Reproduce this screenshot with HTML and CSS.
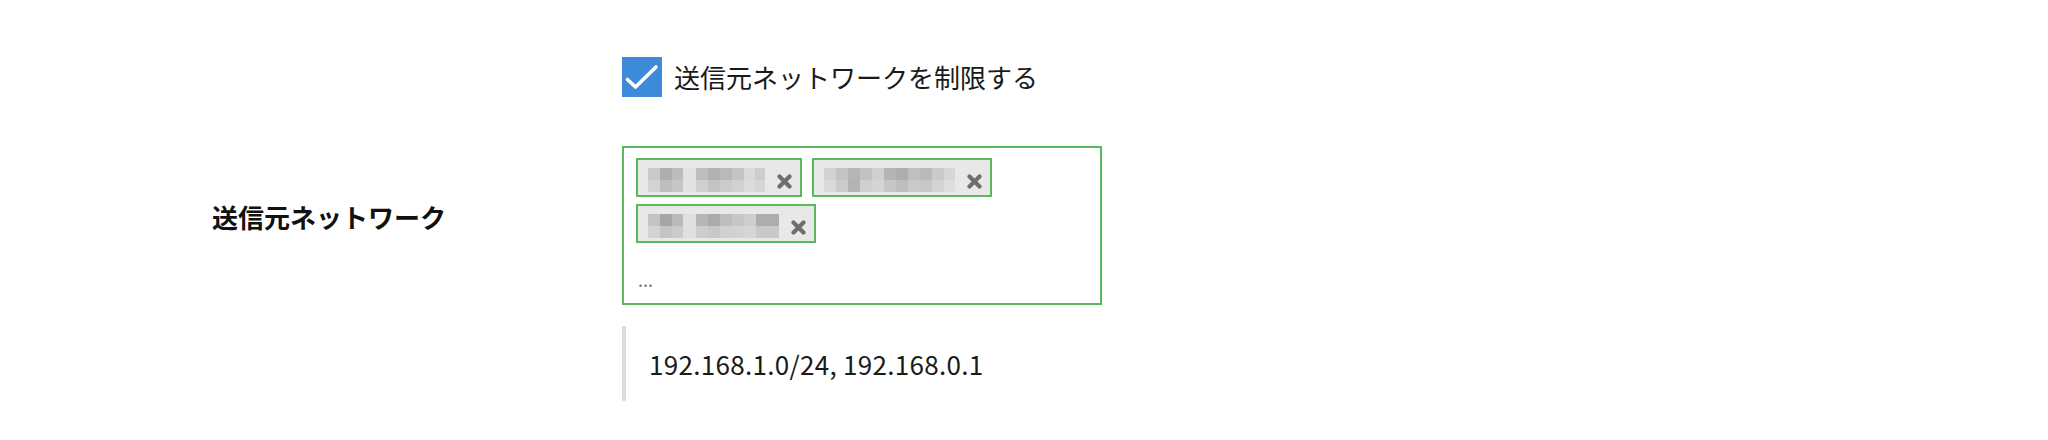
FILE: index.html
```html
<!DOCTYPE html>
<html lang="ja">
<head>
<meta charset="utf-8">
<title>送信元ネットワーク</title>
<link rel="stylesheet" href="styles.css">
</head>
<body>
<div class="form">
  <div class="row check-row">
    <div class="spacer"></div>
    <label class="check">
      <span class="box-icon">
        <svg width="40" height="40" viewBox="0 0 40 40"><path d="M5.5 22.5 L13.5 30 L34 10" fill="none" stroke="#fff" stroke-width="3.6" stroke-linecap="round" stroke-linejoin="round"/></svg>
      </span>
      <span class="check-text">送信元ネットワークを制限する</span>
    </label>
  </div>

  <div class="row field-row">
    <div class="label">送信元ネットワーク</div>
    <div class="select">
      <div class="tags">
        <span class="tag">
          <svg class="mosaic" width="117" height="24" viewBox="0 0 117 24">
            <rect x="0" y="0" width="12" height="12" fill="#c9c9c9"/><rect x="12" y="0" width="12" height="12" fill="#aeaeae"/><rect x="24" y="0" width="11" height="12" fill="#bcbcbc"/>
            <rect x="35" y="0" width="13" height="24" fill="#e2e2e2"/>
            <rect x="48" y="0" width="12" height="12" fill="#bdbdbd"/><rect x="60" y="0" width="12" height="12" fill="#b1b1b1"/><rect x="72" y="0" width="12" height="12" fill="#b9b9b9"/><rect x="84" y="0" width="12" height="12" fill="#c4c4c4"/><rect x="96" y="0" width="11" height="12" fill="#d9d9d9"/><rect x="107" y="0" width="10" height="12" fill="#cdcdcd"/>
            <rect x="0" y="12" width="12" height="12" fill="#d3d3d3"/><rect x="12" y="12" width="12" height="12" fill="#bdbdbd"/><rect x="24" y="12" width="11" height="12" fill="#c6c6c6"/>
            <rect x="48" y="12" width="12" height="12" fill="#cfcfcf"/><rect x="60" y="12" width="12" height="12" fill="#c3c3c3"/><rect x="72" y="12" width="12" height="12" fill="#cbcbcb"/><rect x="84" y="12" width="12" height="12" fill="#d1d1d1"/><rect x="96" y="12" width="11" height="12" fill="#dcdcdc"/><rect x="107" y="12" width="10" height="12" fill="#d6d6d6"/>
          </svg>
          <svg class="x" width="15" height="15" viewBox="0 0 15 15"><path d="M2.5 2.5 L12.5 12.5 M12.5 2.5 L2.5 12.5" stroke="#6e6e6e" stroke-width="4.2" stroke-linecap="round"/></svg>
        </span>
        <span class="tag">
          <svg class="mosaic" width="131" height="24" viewBox="0 0 131 24">
            <rect x="0" y="0" width="12" height="12" fill="#d2d2d2"/><rect x="12" y="0" width="12" height="12" fill="#c3c3c3"/><rect x="24" y="0" width="12" height="12" fill="#b5b5b5"/><rect x="36" y="0" width="12" height="12" fill="#c2c2c2"/><rect x="48" y="0" width="12" height="12" fill="#cfcfcf"/><rect x="60" y="0" width="12" height="12" fill="#b4b4b4"/><rect x="72" y="0" width="12" height="12" fill="#adadad"/><rect x="84" y="0" width="12" height="12" fill="#bfbfbf"/><rect x="96" y="0" width="12" height="12" fill="#b9b9b9"/><rect x="108" y="0" width="12" height="12" fill="#cacaca"/><rect x="120" y="0" width="11" height="12" fill="#d6d6d6"/>
            <rect x="0" y="12" width="12" height="12" fill="#dadada"/><rect x="12" y="12" width="12" height="12" fill="#cbcbcb"/><rect x="24" y="12" width="12" height="12" fill="#b3b3b3"/><rect x="36" y="12" width="12" height="12" fill="#cfcfcf"/><rect x="48" y="12" width="12" height="12" fill="#d4d4d4"/><rect x="60" y="12" width="12" height="12" fill="#c6c6c6"/><rect x="72" y="12" width="12" height="12" fill="#bdbdbd"/><rect x="84" y="12" width="12" height="12" fill="#c9c9c9"/><rect x="96" y="12" width="12" height="12" fill="#c7c7c7"/><rect x="108" y="12" width="12" height="12" fill="#d3d3d3"/><rect x="120" y="12" width="11" height="12" fill="#dddddd"/>
          </svg>
          <svg class="x" width="15" height="15" viewBox="0 0 15 15"><path d="M2.5 2.5 L12.5 12.5 M12.5 2.5 L2.5 12.5" stroke="#6e6e6e" stroke-width="4.2" stroke-linecap="round"/></svg>
        </span>
        <span class="tag">
          <svg class="mosaic" width="131" height="24" viewBox="0 0 131 24">
            <rect x="0" y="0" width="12" height="12" fill="#c3c3c3"/><rect x="12" y="0" width="12" height="12" fill="#a5a5a5"/><rect x="24" y="0" width="11" height="12" fill="#bababa"/>
            <rect x="35" y="0" width="13" height="24" fill="#e0e0e0"/>
            <rect x="48" y="0" width="12" height="12" fill="#b6b6b6"/><rect x="60" y="0" width="12" height="12" fill="#ababab"/><rect x="72" y="0" width="12" height="12" fill="#bdbdbd"/><rect x="84" y="0" width="12" height="12" fill="#c6c6c6"/><rect x="96" y="0" width="12" height="12" fill="#cdcdcd"/><rect x="108" y="0" width="23" height="12" fill="#adadad"/>
            <rect x="0" y="12" width="12" height="12" fill="#d3d3d3"/><rect x="12" y="12" width="12" height="12" fill="#c4c4c4"/><rect x="24" y="12" width="11" height="12" fill="#cbcbcb"/>
            <rect x="48" y="12" width="12" height="12" fill="#cdcdcd"/><rect x="60" y="12" width="12" height="12" fill="#c8c8c8"/><rect x="72" y="12" width="12" height="12" fill="#d0d0d0"/><rect x="84" y="12" width="12" height="12" fill="#d2d2d2"/><rect x="96" y="12" width="12" height="12" fill="#d6d6d6"/><rect x="108" y="12" width="23" height="12" fill="#c9c9c9"/>
          </svg>
          <svg class="x" width="15" height="15" viewBox="0 0 15 15"><path d="M2.5 2.5 L12.5 12.5 M12.5 2.5 L2.5 12.5" stroke="#6e6e6e" stroke-width="4.2" stroke-linecap="round"/></svg>
        </span>
      </div>
      <div class="more">...</div>
    </div>
  </div>

  <div class="row note-row">
    <div class="spacer"></div>
    <div class="note">192.168.1.0/24, 192.168.0.1</div>
  </div>
</div>
</body>
</html>
```
FILE: styles.css
```css
html, body {
  margin: 0;
  padding: 0;
  background: #ffffff;
}
body {
  font-family: "Noto Sans CJK JP", "Noto Sans", sans-serif;
  color: #1a1a1a;
}
.form {
  padding: 57px 0 0 212px;
}
.row {
  display: grid;
  grid-template-columns: 410px auto;
  align-items: center;
}
.check {
  display: flex;
  align-items: center;
  gap: 12px;
}
.box-icon {
  width: 40px;
  height: 40px;
  background: #3d8ad8;
  display: block;
}
.box-icon svg {
  display: block;
}
.check-text {
  font-size: 26px;
  line-height: 40px;
  color: #1a1a1a;
}
.field-row {
  margin-top: 49px;
}
.label {
  font-size: 26px;
  font-weight: bold;
  color: #111;
  line-height: 40px;
  margin-top: -17px;
}
.select {
  box-sizing: border-box;
  width: 480px;
  height: 159px;
  border: 2px solid #5cb85c;
  padding: 10px 12px 0 12px;
}
.tags {
  display: flex;
  flex-wrap: wrap;
  gap: 7px 10px;
  width: 380px;
}
.tag {
  display: flex;
  align-items: flex-start;
  height: 39px;
  box-sizing: border-box;
  border: 2px solid #5cb85c;
  background: #e8e8e8;
  padding: 8px 8px 0 10px;
  gap: 12px;
}
.mosaic {
  display: block;
}
.x {
  display: block;
  margin-top: 6px;
}
.more {
  font-size: 18px;
  color: #777;
  line-height: 20px;
  margin-top: 26px;
  padding-left: 2px;
}
.note-row {
  margin-top: 21px;
}
.note {
  border-left: 4px solid #dddddd;
  height: 75px;
  box-sizing: border-box;
  padding-left: 23px;
  display: flex;
  align-items: center;
  font-size: 26px;
  letter-spacing: 0.3px;
  color: #1a1a1a;
}
```
